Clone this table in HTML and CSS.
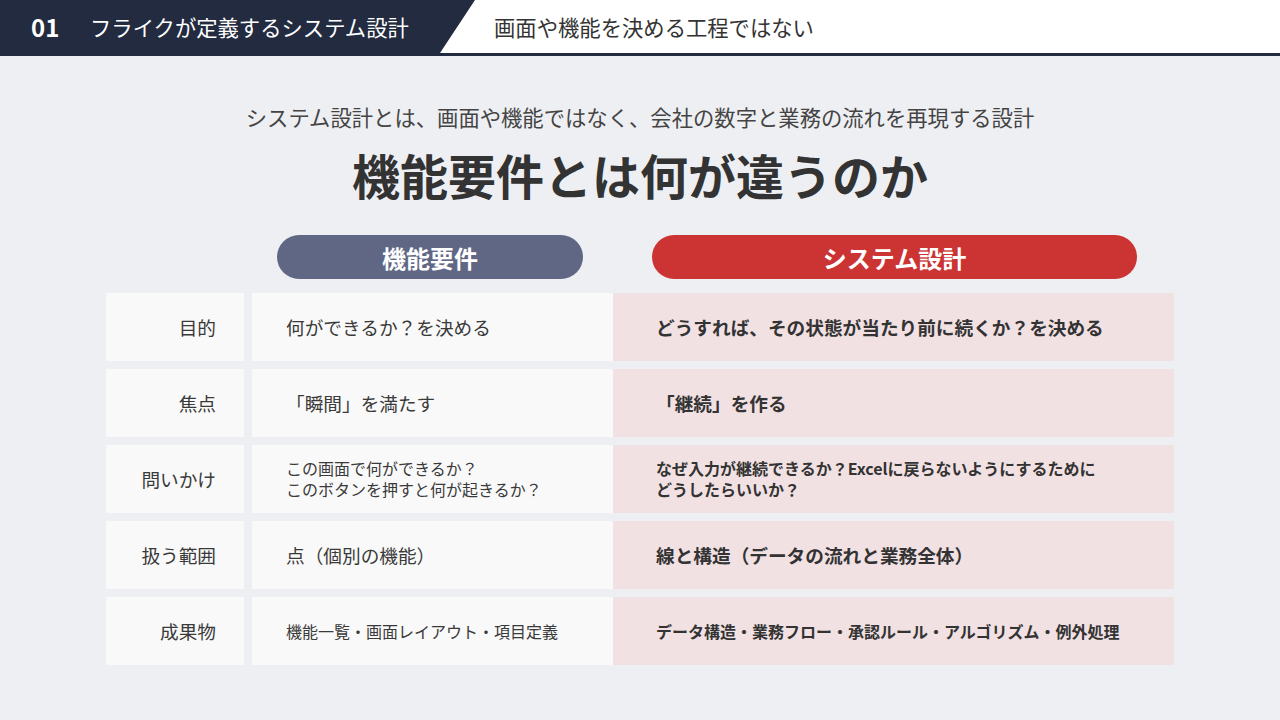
FILE: index.html
```html
<!DOCTYPE html>
<html lang="ja">
<head>
<meta charset="utf-8">
<title>機能要件とは何が違うのか</title>
<link rel="stylesheet" href="styles.css">
</head>
<body>
<header class="topbar">
  <div class="topbar-left">
    <span class="num">01</span>
    <span class="section">フライクが定義するシステム設計</span>
  </div>
  <div class="topbar-right">画面や機能を決める工程ではない</div>
</header>
<main class="content">
  <p class="subtitle">システム設計とは、画面や機能ではなく、会社の数字と業務の流れを再現する設計</p>
  <h1 class="title">機能要件とは何が違うのか</h1>
  <div class="heads">
    <div class="head-spacer"></div>
    <div class="head-cell mid-col"><span class="pill pill-func">機能要件</span></div>
    <div class="head-cell sys-col"><span class="pill pill-sys">システム設計</span></div>
  </div>
  <div class="table">
    <div class="row">
      <div class="cell label">目的</div>
      <div class="cell mid">何ができるか？を決める</div>
      <div class="cell sys">どうすれば、その状態が当たり前に続くか？を決める</div>
    </div>
    <div class="row">
      <div class="cell label">焦点</div>
      <div class="cell mid">「瞬間」を満たす</div>
      <div class="cell sys">「継続」を作る</div>
    </div>
    <div class="row">
      <div class="cell label">問いかけ</div>
      <div class="cell mid small">この画面で何ができるか？<br>このボタンを押すと何が起きるか？</div>
      <div class="cell sys small">なぜ入力が継続できるか？Excelに戻らないようにするために<br>どうしたらいいか？</div>
    </div>
    <div class="row">
      <div class="cell label">扱う範囲</div>
      <div class="cell mid">点（個別の機能）</div>
      <div class="cell sys">線と構造（データの流れと業務全体）</div>
    </div>
    <div class="row">
      <div class="cell label">成果物</div>
      <div class="cell mid small">機能一覧・画面レイアウト・項目定義</div>
      <div class="cell sys small">データ構造・業務フロー・承認ルール・アルゴリズム・例外処理</div>
    </div>
  </div>
</main>
</body>
</html>
```

FILE: styles.css
```css
* { box-sizing: border-box; }
html, body {
  margin: 0;
  padding: 0;
}
body {
  width: 1280px;
  height: 720px;
  overflow: hidden;
  background: #eeeff3;
  font-family: "Noto Sans CJK JP", "Noto Sans", sans-serif;
  color: #333333;
}
.topbar {
  display: flex;
  align-items: center;
  height: 56px;
  background: #ffffff;
  border-bottom: 3px solid #232b40;
}
.topbar-left {
  display: flex;
  align-items: center;
  width: 475px;
  height: 53px;
  padding-left: 31px;
  background: #232b40;
  clip-path: polygon(0 0, 100% 0, calc(100% - 35px) 100%, 0 100%);
  color: #ffffff;
}
.num {
  font-size: 24px;
  font-weight: 700;
  width: 59px;
}
.section {
  font-size: 21.33px;
  font-weight: 400;
}
.topbar-right {
  margin-left: 19px;
  font-size: 21.33px;
  color: #333333;
}
.content {
  padding-top: 46px;
  display: flex;
  flex-direction: column;
  align-items: center;
}
.subtitle {
  margin: 0;
  font-size: 21.33px;
  line-height: 30px;
  color: #444444;
}
.title {
  margin: 10px 0 0;
  font-size: 48px;
  line-height: 64px;
  font-weight: 700;
  color: #333333;
}
.heads {
  display: flex;
  width: 1068px;
  margin-top: 29px;
  height: 44px;
}
.head-spacer { width: 146px; }
.head-cell {
  display: flex;
  justify-content: flex-start;
}
.mid-col { width: 361px; padding-left: 25px; }
.sys-col { width: 561px; padding-left: 39px; }
.pill {
  display: flex;
  align-items: center;
  justify-content: center;
  height: 44px;
  border-radius: 22px;
  color: #ffffff;
  font-size: 24px;
  font-weight: 700;
}
.pill-func {
  width: 306px;
  background: #5f6784;
}
.pill-sys {
  width: 485px;
  background: #cc3333;
}
.table {
  display: flex;
  flex-direction: column;
  gap: 8px;
  margin-top: 14px;
  width: 1068px;
}
.row {
  display: flex;
  height: 68px;
}
.cell {
  display: flex;
  align-items: center;
  font-size: 18.67px;
  line-height: 24px;
}
.label {
  width: 138px;
  margin-right: 8px;
  justify-content: flex-end;
  padding-right: 28px;
  background: #f9f9f9;
  color: #3a3a3a;
}
.mid {
  width: 361px;
  padding-left: 34px;
  background: #f9f9f9;
  color: #3a3a3a;
}
.sys {
  width: 561px;
  padding-left: 43px;
  background: #f2e1e3;
  font-weight: 700;
  color: #333333;
}
.cell.small {
  font-size: 16px;
  line-height: 21px;
}
```
